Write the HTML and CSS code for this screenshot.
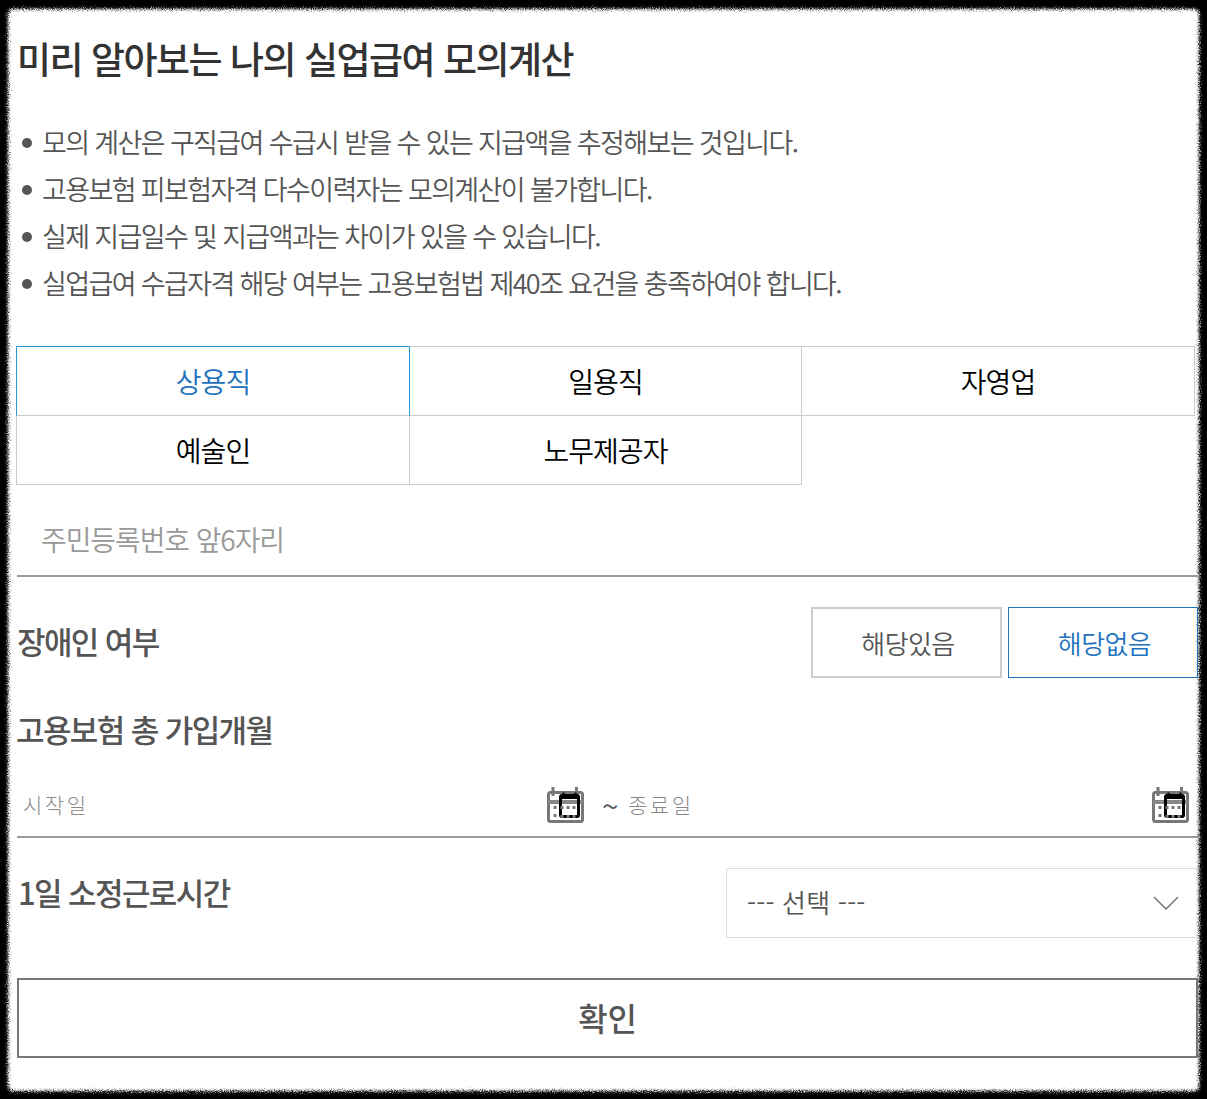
FILE: index.html
```html
<!DOCTYPE html>
<html lang="ko">
<head>
<meta charset="utf-8">
<title>실업급여 모의계산</title>
<link rel="stylesheet" href="styles.css">
</head>
<body>
<svg class="defs" width="0" height="0" aria-hidden="true">
  <filter id="torn" x="-2%" y="-2%" width="104%" height="104%">
    <feGaussianBlur in="SourceGraphic" stdDeviation="1.7" result="b"/>
    <feTurbulence type="fractalNoise" baseFrequency="0.9" numOctaves="2" seed="4" result="n"/>
    <feDisplacementMap in="b" in2="n" scale="7" xChannelSelector="R" yChannelSelector="G"/>
  </filter>
  <symbol id="cal" viewBox="0 0 37 36">
    <rect x="1.500" y="5.500" width="34" height="29" rx="2" fill="#fff" stroke="#777" stroke-width="3"/>
    <path d="M6 0v9M29.500 0v9" stroke="#777" stroke-width="3"/>
    <path d="M1 15h35" stroke="#888" stroke-width="4"/>
    <rect x="13.500" y="8.500" width="18" height="21" rx="1.500" fill="none" stroke="#000" stroke-width="3"/>
    <path d="M13 10h19" stroke="#000" stroke-width="4"/>
    <path d="M16.500 5.500v3M28.500 5.500v3" stroke="#000" stroke-width="2"/>
    <path d="M6.500 20.500h3M13.500 20.500h3M19.500 20.500h3M25.500 20.500h3M6.500 28.500h3" stroke="#777" stroke-width="3"/>
    <path d="M13.500 29.500h3M19.500 29.500h3M25.500 29.500h3" stroke="#777" stroke-width="3"/>
  </symbol>
</svg>
<div class="torn"></div>
<main class="sheet">
  <h1 class="title">미리 알아보는 나의 실업급여 모의계산</h1>
  <ul class="notes">
    <li>모의 계산은 구직급여 수급시 받을 수 있는 지급액을 추정해보는 것입니다.</li>
    <li>고용보험 피보험자격 다수이력자는 모의계산이 불가합니다.</li>
    <li>실제 지급일수 및 지급액과는 차이가 있을 수 있습니다.</li>
    <li>실업급여 수급자격 해당 여부는 고용보험법 제40조 요건을 충족하여야 합니다.</li>
  </ul>
  <div class="tabs">
    <div class="tab active">상용직</div>
    <div class="tab">일용직</div>
    <div class="tab">자영업</div>
    <div class="tab">예술인</div>
    <div class="tab">노무제공자</div>
  </div>
  <div class="idfield">주민등록번호 앞6자리</div>
  <div class="row disability">
    <h2 class="label">장애인 여부</h2>
    <div class="choices">
      <div class="choice">해당있음</div>
      <div class="choice on">해당없음</div>
    </div>
  </div>
  <h2 class="label months">고용보험 총 가입개월</h2>
  <div class="dates">
    <div class="date start">
      <span class="date-text">시작일</span>
      <svg class="cal" width="37" height="36"><use href="#cal"/></svg>
    </div>
    <span class="tilde">~</span>
    <div class="date end">
      <span class="date-text">종료일</span>
      <svg class="cal" width="37" height="36"><use href="#cal"/></svg>
    </div>
  </div>
  <div class="row hours">
    <h2 class="label">1일 소정근로시간</h2>
    <div class="select">
      <span class="select-text">--- 선택 ---</span>
      <svg width="26" height="14" viewBox="0 0 26 14"><path d="M1 1l12 12L25 1" fill="none" stroke="#777" stroke-width="1.500"/></svg>
    </div>
  </div>
  <div class="confirm">확인</div>
</main>
</body>
</html>
```
FILE: styles.css
```css
* { box-sizing: border-box; }
html, body { margin: 0; height: 1099px; overflow: hidden; }
body {
  background: #000;
  position: relative;
  font-family: "Noto Sans CJK KR", "Noto Sans", sans-serif;
  color: #555;
}
.defs { position: absolute; }
.torn {
  position: absolute;
  left: 8px; top: 9px; width: 1191px; height: 1082px;
  background: #fff;
  border-radius: 5px;
  filter: url(#torn);
}
.sheet {
  position: relative;
  padding: 33px 9px 0 16px;
  height: 1099px;
}
.title {
  margin: 0 0 0 1px;
  font-size: 37px;
  line-height: 50px;
  font-weight: 500;
  letter-spacing: -1.5px;
  color: #333;
}
.notes {
  list-style: none;
  margin: 35px 0 0;
  padding: 0;
}
.notes li {
  position: relative;
  padding-left: 26px;
  height: 47px;
  font-size: 27px;
  line-height: 47px;
  font-weight: 350;
  letter-spacing: -1.63px;
}
.notes li::before {
  content: "";
  position: absolute;
  left: 6px; top: 20px;
  width: 10px; height: 10px;
  border-radius: 50%;
  background: #555;
}
.tabs {
  display: grid;
  grid-template-columns: 393px 392px 393px;
  grid-auto-rows: 69px;
  margin: 40px 0 0;
  width: 1179px;
}
.tab {
  display: flex;
  align-items: center;
  justify-content: center;
  font-size: 28px;
  color: #000;
  font-weight: 350;
  letter-spacing: -1px;
  border: 1px solid #ccc;
  margin: 0 -1px -1px 0;
}
.tab.active {
  color: #2272bd;
  border-color: #2b9ad8 #2b9ad8 #ccc;
  position: relative;
  z-index: 1;
}
.idfield {
  margin: 23px 0 0 1px;
  height: 70px;
  padding-left: 24px;
  font-size: 28px;
  line-height: 65px;
  font-weight: 350;
  letter-spacing: -1.1px;
  color: #999;
  border-bottom: 2px solid #999;
}
.row { display: flex; justify-content: space-between; }
.disability { margin-top: 30px; align-items: center; }
.label {
  margin: 0;
  font-size: 31px;
  line-height: 44px;
  font-weight: 500;
  letter-spacing: -1.6px;
  color: #555;
}
.disability .label { margin: -3px 0 0 1px; }
.choices { display: flex; gap: 6px; }
.choice {
  width: 191px;
  height: 71px;
  padding-left: 3px;
  display: flex;
  align-items: center;
  justify-content: center;
  border: 2px solid #ccc;
  font-size: 26px;
  font-weight: 350;
  letter-spacing: -0.6px;
}
.choice.on {
  width: 190px;
  color: #2272bd;
  border: 1px solid #2272bd;
}
.months { margin: 29px 0 0; }
.dates {
  display: flex;
  align-items: center;
  margin: 23px 0 0 1px;
  height: 64px;
  border-bottom: 2px solid #999;
  font-size: 21px;
  font-weight: 300;
  letter-spacing: 2.5px;
  color: #888;
}
.date { display: flex; align-items: center; justify-content: space-between; }
.date-text { margin-top: -2px; }
.start { width: 567px; padding-left: 6px; }
.end { flex: 1; padding-right: 9px; padding-left: 0; }
.tilde {
  width: 44px;
  padding-left: 18px;
  color: #555;
  font-size: 30px;
  line-height: 30px;
  font-weight: 350;
  letter-spacing: 0;
}
.hours { margin-top: 30px; align-items: flex-start; }
.hours .label { margin: 2px 0 0 2px; }
.select {
  width: 472px;
  height: 70px;
  padding: 0 19px 0 20px;
  display: flex;
  align-items: center;
  justify-content: space-between;
  border: 1px solid #ddd;
  border-right: 0;
  font-size: 26px;
  font-weight: 350;
  letter-spacing: 0.25px;
}
.select-text { margin-top: -4px; }
.confirm {
  margin: 40px 0 0 1px;
  height: 80px;
  padding-bottom: 3px;
  display: flex;
  align-items: center;
  justify-content: center;
  border: 2px solid #777;
  font-size: 32px;
  font-weight: 500;
  letter-spacing: -0.2px;
}
```
